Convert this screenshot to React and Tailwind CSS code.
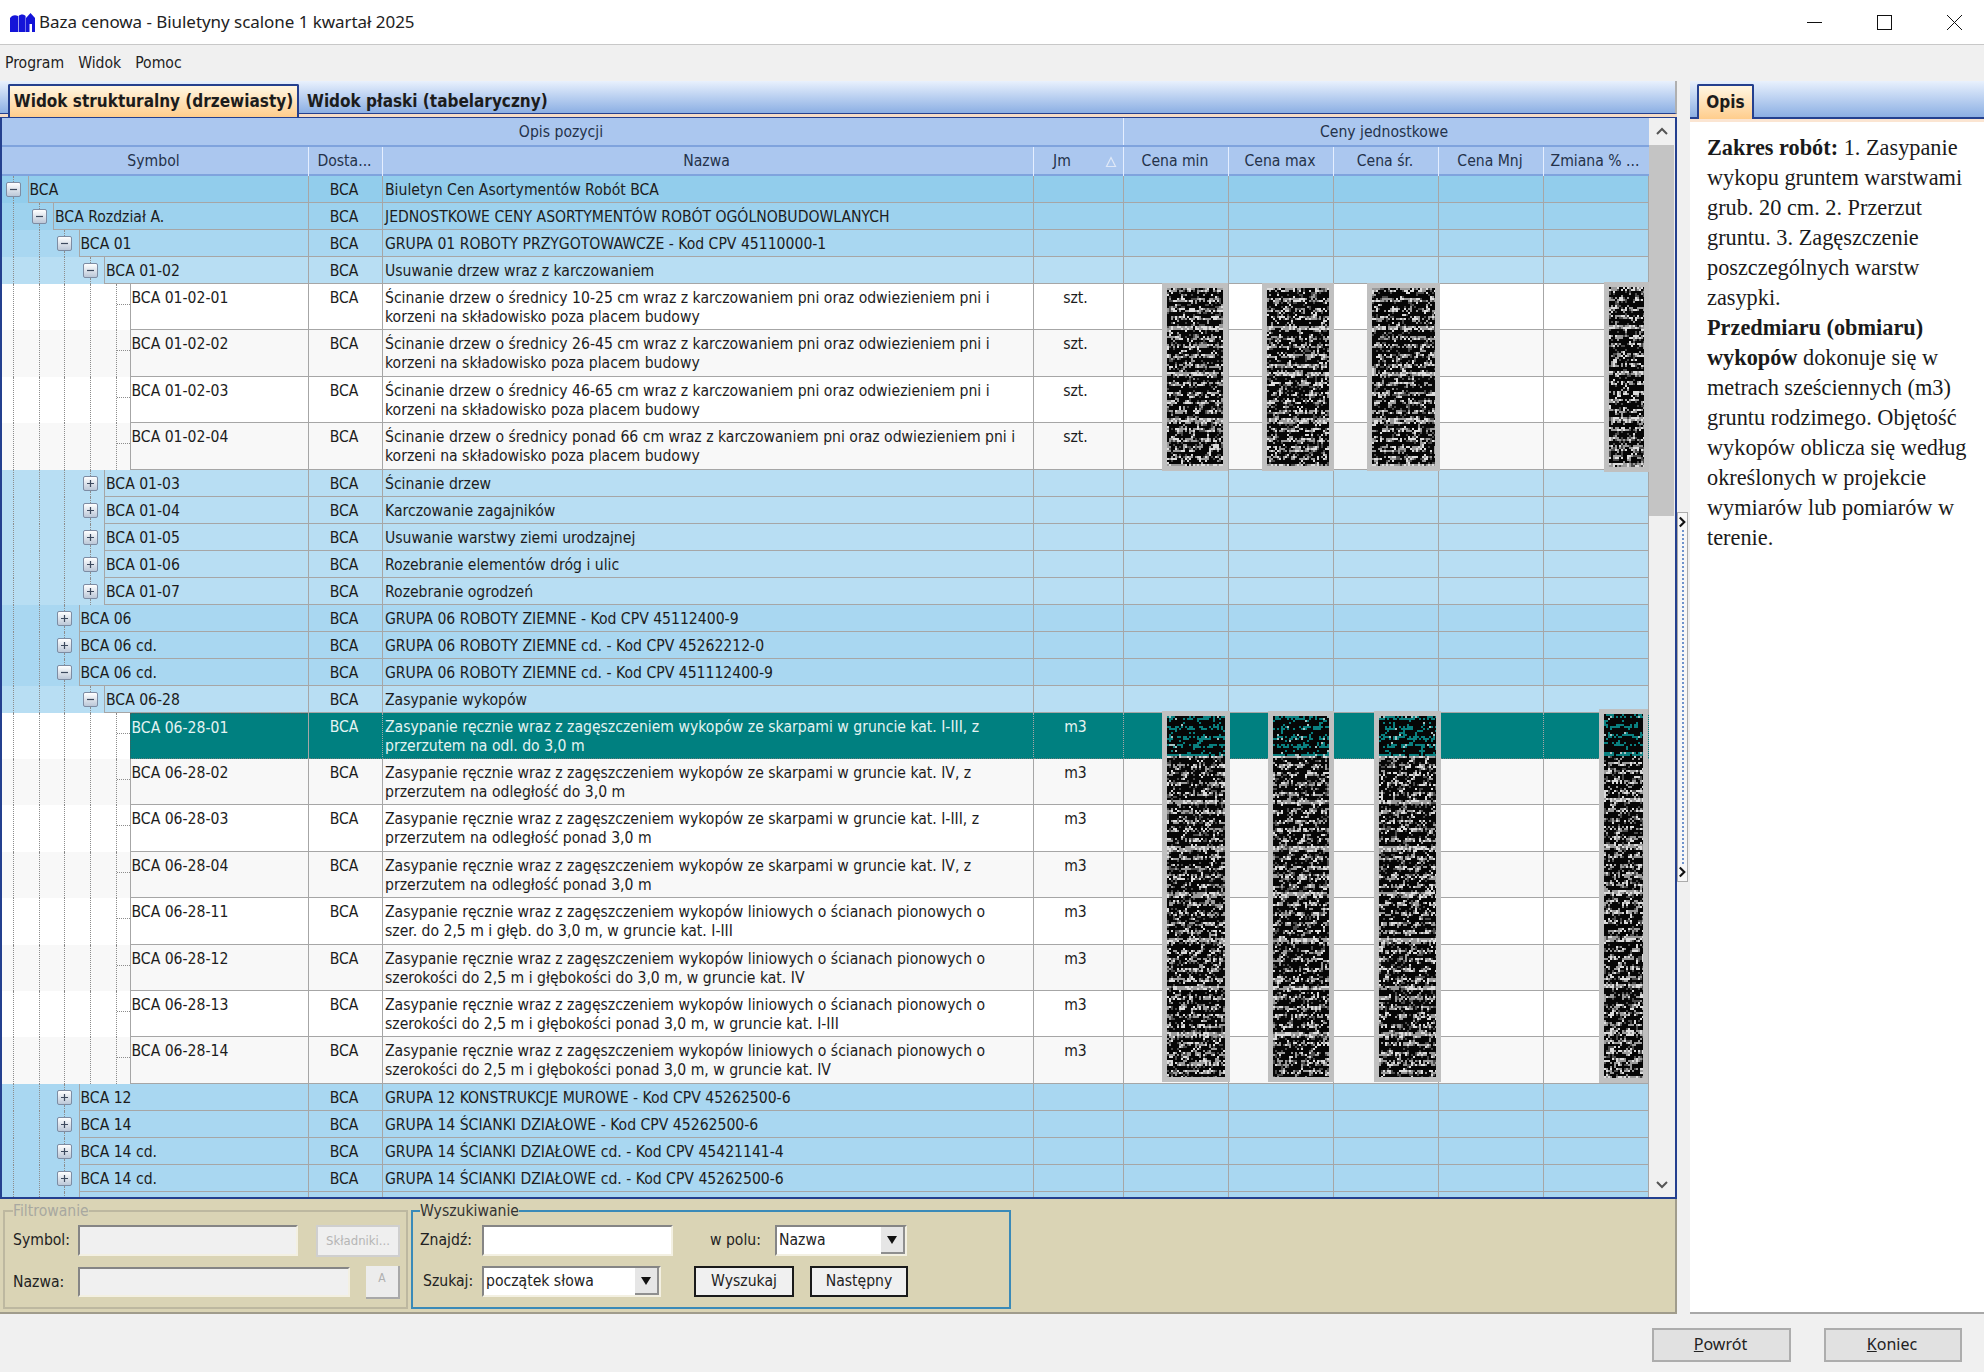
import React, { useMemo } from "react";

const GROUP_BG = ["bg-[#92cdec]", "bg-[#9dd2ee]", "bg-[#a9d7f1]", "bg-[#b8def3]"];

const L = (level, sym, name, open) => ({ level, sym, name, open });
const G = (sym, a, b, unit, sel) => ({ level: 4, sym, name: a + "\n" + b, unit, sel });

const ROWS = [
  L(0, "BCA", "Biuletyn Cen Asortymentów Robót BCA", true),
  L(1, "BCA Rozdział A.", "JEDNOSTKOWE CENY ASORTYMENTÓW ROBÓT OGÓLNOBUDOWLANYCH", true),
  L(2, "BCA 01", "GRUPA 01 ROBOTY PRZYGOTOWAWCZE - Kod CPV 45110000-1", true),
  L(3, "BCA 01-02", "Usuwanie drzew wraz z karczowaniem", true),
  G("BCA 01-02-01", "Ścinanie drzew o średnicy 10-25 cm wraz z karczowaniem pni oraz odwiezieniem pni i", "korzeni na składowisko poza placem budowy", "szt."),
  G("BCA 01-02-02", "Ścinanie drzew o średnicy 26-45 cm wraz z karczowaniem pni oraz odwiezieniem pni i", "korzeni na składowisko poza placem budowy", "szt."),
  G("BCA 01-02-03", "Ścinanie drzew o średnicy 46-65 cm wraz z karczowaniem pni oraz odwiezieniem pni i", "korzeni na składowisko poza placem budowy", "szt."),
  G("BCA 01-02-04", "Ścinanie drzew o średnicy ponad 66 cm wraz z karczowaniem pni oraz odwiezieniem pni i", "korzeni na składowisko poza placem budowy", "szt."),
  L(3, "BCA 01-03", "Ścinanie drzew"),
  L(3, "BCA 01-04", "Karczowanie zagajników"),
  L(3, "BCA 01-05", "Usuwanie warstwy ziemi urodzajnej"),
  L(3, "BCA 01-06", "Rozebranie elementów dróg i ulic"),
  L(3, "BCA 01-07", "Rozebranie ogrodzeń"),
  L(2, "BCA 06", "GRUPA 06 ROBOTY ZIEMNE - Kod CPV 45112400-9"),
  L(2, "BCA 06 cd.", "GRUPA 06 ROBOTY ZIEMNE cd. - Kod CPV 45262212-0"),
  L(2, "BCA 06 cd.", "GRUPA 06 ROBOTY ZIEMNE cd. - Kod CPV 451112400-9", true),
  L(3, "BCA 06-28", "Zasypanie wykopów", true),
  G("BCA 06-28-01", "Zasypanie ręcznie wraz z zagęszczeniem wykopów ze skarpami w gruncie kat. I-III, z", "przerzutem na odl. do 3,0 m", "m3", true),
  G("BCA 06-28-02", "Zasypanie ręcznie wraz z zagęszczeniem wykopów ze skarpami w gruncie kat. IV, z", "przerzutem na odległość do 3,0 m", "m3"),
  G("BCA 06-28-03", "Zasypanie ręcznie wraz z zagęszczeniem wykopów ze skarpami w gruncie kat. I-III, z", "przerzutem na odległość ponad 3,0 m", "m3"),
  G("BCA 06-28-04", "Zasypanie ręcznie wraz z zagęszczeniem wykopów ze skarpami w gruncie kat. IV, z", "przerzutem na odległość ponad 3,0 m", "m3"),
  G("BCA 06-28-11", "Zasypanie ręcznie wraz z zagęszczeniem wykopów liniowych o ścianach pionowych o", "szer. do 2,5 m i głęb. do 3,0 m, w gruncie kat. I-III", "m3"),
  G("BCA 06-28-12", "Zasypanie ręcznie wraz z zagęszczeniem wykopów liniowych o ścianach pionowych o", "szerokości do 2,5 m i głębokości do 3,0 m, w gruncie kat. IV", "m3"),
  G("BCA 06-28-13", "Zasypanie ręcznie wraz z zagęszczeniem wykopów liniowych o ścianach pionowych o", "szerokości do 2,5 m i głębokości ponad 3,0 m, w gruncie kat. I-III", "m3"),
  G("BCA 06-28-14", "Zasypanie ręcznie wraz z zagęszczeniem wykopów liniowych o ścianach pionowych o", "szerokości do 2,5 m i głębokości ponad 3,0 m, w gruncie kat. IV", "m3"),
  L(2, "BCA 12", "GRUPA 12 KONSTRUKCJE MUROWE - Kod CPV 45262500-6"),
  L(2, "BCA 14", "GRUPA 14 ŚCIANKI DZIAŁOWE - Kod CPV 45262500-6"),
  L(2, "BCA 14 cd.", "GRUPA 14 ŚCIANKI DZIAŁOWE cd. - Kod CPV 45421141-4"),
  L(2, "BCA 14 cd.", "GRUPA 14 ŚCIANKI DZIAŁOWE cd. - Kod CPV 45262500-6"),
  L(2, "", ""),
];

const COLS = "grid grid-cols-[307px_74px_651px_90px_105px_105px_105px_105px_105px]";

function Guide() {
  return (
    <div className="w-[25.5px] shrink-0 pr-[2px] flex justify-center">
      <div className="h-full border-l border-dotted border-[#8c8c8c]" />
    </div>
  );
}

function Expander({ open }) {
  return (
    <div className="w-[25.5px] shrink-0 pr-[2px] flex flex-col items-center">
      <div className="h-[6px] border-l border-dotted border-[#8c8c8c]" />
      <div className="w-[15px] h-[15px] shrink-0 rounded-[2px] border border-[#7d8ca3] bg-gradient-to-b from-[#ffffff] to-[#bcc8d8] flex items-center justify-center">
        <svg width="9" height="9" viewBox="0 0 9 9">
          <path d={open ? "M1 4.5h7" : "M1 4.5h7M4.5 1v7"} stroke="#3d4a5e" strokeWidth="1.2" />
        </svg>
      </div>
      <div className="flex-1 border-l border-dotted border-[#8c8c8c]" />
    </div>
  );
}

function Row({ row, leafShade }) {
  const leaf = row.level === 4;
  const bg = leaf ? (leafShade ? "bg-[#f8f8f8]" : "bg-[#ffffff]") : GROUP_BG[row.level];
  const cell = row.sel ? "bg-[#008080] text-[#e4f3f2]" : "text-[#1c1c1c]";
  const h = leaf ? "h-[46.4px]" : "h-[27px]";
  const line = row.sel ? "border-b border-dotted border-b-[#6b7f7f]" : "border-b border-b-[#a6a6a6]";
  const guides = [];
  const count = leaf ? 4 : row.level;
  for (let i = 0; i < count; i++) guides.push(<Guide key={i} />);
  return (
    <div className={`${COLS} ${h} ${bg}`}>
      <div className="flex h-full border-r border-[#a6a6a6]">
        {guides}
        {leaf ? (
          <div className="w-[25.5px] shrink-0 pl-[12px]">
            <div className="h-full border-l border-dotted border-[#8c8c8c] pt-[20px]">
              <div className="border-t border-dotted border-[#8c8c8c]" />
            </div>
          </div>
        ) : (
          <Expander open={row.open} />
        )}
        <div className={`flex-1 min-w-0 pl-[1px] pt-[5px] whitespace-nowrap border-l ${row.sel ? "border-dotted border-t border-[#3f5f5f]" : "border-[#a6a6a6]"} ${line} ${cell}`}>
          {row.sym}
        </div>
      </div>
      <div className={`h-full border-r border-r-[#a6a6a6] ${line} ${cell} pt-[5px] text-center pr-[3px]`}>{row.sym ? "BCA" : ""}</div>
      <div className={`h-full border-r border-r-[#a6a6a6] ${line} ${cell} pt-[5px] pl-[2px] whitespace-pre`}>{row.name}</div>
      <div className={`h-full border-r border-r-[#a6a6a6] ${line} ${cell} pt-[5px] text-center pr-[6px]`}>{row.unit}</div>
      <div className={`h-full border-r border-r-[#a6a6a6] ${line} ${cell}`} />
      <div className={`h-full border-r border-r-[#a6a6a6] ${line} ${cell}`} />
      <div className={`h-full border-r border-r-[#a6a6a6] ${line} ${cell}`} />
      <div className={`h-full border-r border-r-[#a6a6a6] ${line} ${cell}`} />
      <div className={`h-full border-r border-r-[#a6a6a6] ${line} ${cell}`} />
    </div>
  );
}

function noise(w, h, seed, tealH) {
  let s = seed >>> 0;
  const rnd = () => {
    s = (s + 0x6d2b79f5) >>> 0;
    let t = s;
    t = Math.imul(t ^ (t >>> 15), t | 1);
    t ^= t + Math.imul(t ^ (t >>> 7), t | 61);
    return ((t ^ (t >>> 14)) >>> 0) / 4294967296;
  };
  const p = { l: "", m: "", d: "", t: "", q: "" };
  const rect = (k, x, y, ww) => {
    p[k] += `M${x} ${y}h${ww}v2h-${ww}z`;
  };
  for (let y = 0; y < h; y += 2) {
    const ph = ((y + 3) % 9.3) / 9.3;
    const streak = Math.abs(((y + 10) % 46.4) - 2) < 2;
    let base = ph > 0.3 && ph < 0.75 ? 0.52 : 0.1;
    if (streak) base = 0.86;
    const teal = y < tealH;
    for (let x = 0; x < w; x += 2) {
      const wave = Math.sin(x / 2.6 + y / 3) * 0.18;
      const r = rnd();
      if (r < base + wave) {
        const c = rnd();
        if (teal) rect(c < 0.9 ? "t" : "q", x, y, 2);
        else rect(c < 0.42 ? "l" : "m", x, y, 2);
      } else if (r < base + wave + 0.14 && !teal) {
        rect("d", x, y, 2);
      }
    }
  }
  return p;
}

function Noise({ w, h, seed, teal = 0, pos }) {
  const p = useMemo(() => noise(w, h, seed, teal), [w, h, seed, teal]);
  return (
    <div className={`absolute border-[5px] border-[#c0c0c0] overflow-hidden bg-[#060606] ${pos}`}>
      <svg width={w} height={h} viewBox={`0 0 ${w} ${h}`} className="blur-[0.6px] block">
        <path d={p.d} fill="#4c4c4c" />
        <path d={p.m} fill="#9a9a9a" />
        <path d={p.l} fill="#dcdcdc" />
        <path d={p.t} fill="#0a7f7f" />
        <path d={p.q} fill="#a8c4c4" />
      </svg>
    </div>
  );
}

function Chevron({ dir, className }) {
  const d = dir === "up" ? "M1 7l5-5 5 5" : dir === "down" ? "M1 2l5 5 5-5" : "M2 1l5 5-5 5";
  return (
    <svg width="12" height={dir === "right" ? 12 : 9} viewBox={dir === "right" ? "0 0 10 12" : "0 0 12 9"} className={className}>
      <path d={d} fill="none" stroke={dir === "right" ? "#111" : "#555"} strokeWidth={dir === "right" ? 2.4 : 2} />
    </svg>
  );
}

function Arrow() {
  return (
    <div className="w-[24px] h-full bg-[#e6e6e6] border-r-2 border-b-2 border-[#8f8f8f] flex items-center justify-center shrink-0">
      <svg width="10" height="8" viewBox="0 0 10 8"><path d="M0 0h10L5 8z" fill="#111" /></svg>
    </div>
  );
}

const SUNKEN = "border-2 border-t-[#858585] border-l-[#858585] border-r-[#f3f0e2] border-b-[#f3f0e2]";

function GridPanel() {
  let alt = false;
  return (
    <div className="flex border-2 border-t border-[#24408f] h-[1082px] shrink-0">
      <div className="w-[1647px] shrink-0 flex flex-col">
        <div className="h-[29px] flex text-[#24324a] bg-[#abc7ef] border-b-2 border-[#7fa3dd]">
          <div className="w-[1121px] text-center leading-[29px] pr-[3px]">Opis pozycji</div>
          <div className="flex-1 text-center leading-[29px] border-l border-[#e4eeff] pr-[5px]">Ceny jednostkowe</div>
        </div>
        <div className={`${COLS} h-[29px] bg-[#abc7ef] border-b-2 border-[#7fa3dd] text-[#24324a] leading-[29px] text-center whitespace-nowrap`}>
          <div className="border-r border-[#e4eeff] pr-[3px]">Symbol</div>
          <div className="border-r border-[#e4eeff] pr-[2px]">Dosta...</div>
          <div className="border-r border-[#e4eeff] pr-[3px]">Nazwa</div>
          <div className="border-r border-[#e4eeff] flex justify-between items-center pl-[19px] pr-[6px]">
            <span>Jm</span>
            <svg width="12" height="12" viewBox="0 0 12 12"><path d="M6 1.5L10.5 10.5H1.5z" fill="none" stroke="#dfe8f7" strokeWidth="1.2" /></svg>
          </div>
          <div className="border-r border-[#e4eeff] pr-[2px]">Cena min</div>
          <div className="border-r border-[#e4eeff] pr-[2px]">Cena max</div>
          <div className="border-r border-[#e4eeff] pr-[2px]">Cena śr.</div>
          <div className="border-r border-[#e4eeff] pr-[2px]">Cena Mnj</div>
          <div className="pr-[3px]">Zmiana % ...</div>
        </div>
        <div className="relative h-[1021px] overflow-hidden">
          {ROWS.map((r, i) => {
            if (r.level === 4) alt = !alt;
            else alt = false;
            return <Row key={i} row={r} leafShade={!alt} />;
          })}
          <Noise w={56} h={178} seed={11} pos="left-[1160px] top-[107px]" />
          <Noise w={62} h={178} seed={23} pos="left-[1260px] top-[107px]" />
          <Noise w={63} h={178} seed={37} pos="left-[1365px] top-[107px]" />
          <Noise w={35} h={180} seed={41} pos="left-[1602px] top-[106px]" />
          <Noise w={58} h={361} seed={53} teal={40} pos="left-[1160px] top-[535px]" />
          <Noise w={56} h={361} seed={67} teal={40} pos="left-[1266px] top-[535px]" />
          <Noise w={57} h={361} seed={79} teal={40} pos="left-[1372px] top-[535px]" />
          <Noise w={39} h={364} seed={83} teal={42} pos="left-[1597px] top-[533px]" />
        </div>
      </div>
      <div className="flex-1 flex flex-col bg-[#f0f0f0]">
        <div className="h-[27px] shrink-0 flex items-center justify-center"><Chevron dir="up" /></div>
        <div className="h-[371px] shrink-0 mr-[1px] bg-[#c4c4c4]" />
        <div className="flex-1" />
        <div className="h-[24px] shrink-0 flex items-center justify-center mb-[1px]"><Chevron dir="down" /></div>
      </div>
    </div>
  );
}

function FilterPanel() {
  return (
    <div className="flex-1 bg-[#dad4b5] border-r-2 border-b-2 border-[#a09c8c] pl-[3px] pt-[4px] flex gap-[3px] text-[#222]">
      <fieldset className="w-[405px] h-[106px] border-2 border-[#bdb8a0] pl-[8px] pt-[6px]">
        <legend className="ml-[0px] p-0 leading-[16px] text-[#a8a8a0]">Filtrowanie</legend>
        <div className="flex items-center h-[31px]">
          <div className="w-[65px]">Symbol:</div>
          <div className={`w-[220px] h-[31px] bg-[#f0f0f0] ${SUNKEN}`} />
          <div className="w-[84px] h-[32px] ml-[18px] bg-[#efefef] border-2 border-[#cfcfcf] text-center text-[#b5b5b5] text-[13px] leading-[27px]">Składniki...</div>
        </div>
        <div className="flex items-center h-[30px] mt-[11px]">
          <div className="w-[65px]">Nazwa:</div>
          <div className={`w-[272px] h-[30px] bg-[#f0f0f0] ${SUNKEN}`} />
          <div className="w-[34px] h-[33px] ml-[16px] bg-[#ececec] border-r-2 border-b-2 border-[#a8a8a8] text-center text-[#b0b0b0] text-[12px] leading-[24px]">A</div>
        </div>
      </fieldset>
      <fieldset className="w-[600px] h-[106px] border-2 border-[#3a8ab8] pl-[7px] pt-[6px]">
        <legend className="ml-[0px] p-0 leading-[16px] text-[#333]">Wyszukiwanie</legend>
        <div className="flex items-center h-[31px]">
          <div className="w-[62px]">Znajdź:</div>
          <div className={`w-[191px] h-[31px] bg-[#ffffff] ${SUNKEN}`} />
          <div className="w-[65px] ml-[37px]">w polu:</div>
          <div className={`w-[132px] h-[31px] bg-[#ffffff] flex items-center pl-[2px] ${SUNKEN}`}>
            <span className="flex-1">Nazwa</span>
            <Arrow />
          </div>
        </div>
        <div className="flex items-center h-[31px] mt-[10px]">
          <div className="w-[62px] pl-[3px]">Szukaj:</div>
          <div className={`w-[179px] h-[31px] bg-[#ffffff] flex items-center pl-[2px] ${SUNKEN}`}>
            <span className="flex-1 whitespace-nowrap">początek słowa</span>
            <Arrow />
          </div>
          <div className="w-[100px] h-[31px] ml-[33px] bg-[#f0f0f0] border-2 border-[#1a1a1a] text-center leading-[26px]">Wyszukaj</div>
          <div className="w-[98px] h-[31px] ml-[16px] bg-[#f0f0f0] border-2 border-[#1a1a1a] text-center leading-[26px]">Następny</div>
        </div>
      </fieldset>
    </div>
  );
}

export default function App() {
  return (
    <div className="w-[1984px] h-[1372px] flex flex-col bg-[#f0f0f0] overflow-hidden font-['DejaVu_Sans_Condensed','DejaVu_Sans',sans-serif] text-[15.6px] leading-[19px] text-[#1c1c1c]">
      <div className="h-[45px] shrink-0 bg-white border-b border-[#c8c8c8] flex items-center pl-[10px] pr-[22px]">
        <svg width="25" height="19" viewBox="0 0 25 19" className="shrink-0">
          <path d="M0 5l2-2c2-1 4-1 6 0v16H0z" fill="#1414d8" />
          <path d="M8.6 3c2-2 5-2 7 0v16h-7z" fill="#1414d8" />
          <path d="M16 5l4.5-5L25 5v14h-9z" fill="#1414d8" />
          <path d="M19.500 19v-8h2.500v8z" fill="#ffffff" />
        </svg>
        <div className="ml-[4px] -mt-[2px] text-[17px] text-[#222] font-['Noto_Sans',sans-serif] tracking-[-0.05px]">Baza cenowa - Biuletyny scalone 1 kwartał 2025</div>
        <div className="ml-auto flex items-center gap-[55px]">
          <svg width="15" height="15" viewBox="0 0 15 15"><path d="M0 7.5h15" stroke="#111" strokeWidth="1" /></svg>
          <svg width="15" height="15" viewBox="0 0 15 15"><rect x="0.5" y="0.500" width="14" height="14" fill="none" stroke="#111" /></svg>
          <svg width="15" height="15" viewBox="0 0 15 15"><path d="M0 0l15 15M15 0L0 15" stroke="#111" strokeWidth="1" /></svg>
        </div>
      </div>
      <div className="h-[36px] shrink-0 flex items-center pl-[5px] gap-[14px] text-[#222]">
        <span>Program</span>
        <span>Widok</span>
        <span>Pomoc</span>
      </div>
      <div className="flex-1 min-h-0 flex">
        <div className="w-[1677px] shrink-0 flex flex-col">
          <div className="h-[33px] shrink-0 flex pl-[8px] pt-[3px] bg-gradient-to-b from-[#e9f1fd] to-[#8cafe3] border-b border-[#24408f] border-r-2 border-r-[#b0b0b0] font-bold text-[17px]">
            <div className="h-[33px] w-[291px] relative z-10 border-2 border-b-0 border-[#24408f] rounded-t-[2px] bg-gradient-to-b from-[#fff6e2] to-[#ffcd8c] text-center leading-[31px] text-[#1c1c1c] whitespace-nowrap">
              Widok strukturalny (drzewiasty)
            </div>
            <div className="ml-[8px] leading-[34px] text-[#1c1c1c] whitespace-nowrap">Widok płaski (tabelaryczny)</div>
          </div>
          <div className="h-[3px] shrink-0 bg-[#f6dcc6]" />
          <GridPanel />
          <FilterPanel />
        </div>
        <div className="w-[13px] shrink-0 pt-[431px]">
          <div className="w-[11px] h-[370px] border border-[#ababab] bg-[#f7f7f7] flex flex-col items-center py-[3px]">
            <Chevron dir="right" className="shrink-0 w-[9px] h-[12px]" />
            <div className="flex-1 my-[2px] border-l-2 border-dotted border-[#6f93cc]" />
            <Chevron dir="right" className="shrink-0 w-[9px] h-[12px]" />
          </div>
        </div>
        <div className="flex-1 min-w-0 bg-white flex flex-col border-b-2 border-[#a8a8a8]">
          <div className="h-[38px] shrink-0 flex pl-[7px] pt-[3px] bg-gradient-to-b from-[#e9f1fd] to-[#8cafe3] border-b-2 border-[#24408f] font-bold text-[17px]">
            <div className="h-[35px] w-[57px] relative z-10 border-2 border-b-0 border-[#24408f] rounded-t-[2px] bg-gradient-to-b from-[#fff6e2] to-[#ffcd8c] text-center leading-[33px] text-[#1c1c1c]">
              Opis
            </div>
          </div>
          <div className="h-[3px] shrink-0 bg-[#fbe5d2]" />
          <div className="pl-[17px] pt-[11px] font-['Liberation_Serif',serif] text-[22.3px] leading-[30px] text-[#1a1a1a] whitespace-nowrap">
            <b>Zakres robót:</b> 1. Zasypanie<br />
            wykopu gruntem warstwami<br />
            grub. 20 cm. 2. Przerzut<br />
            gruntu. 3. Zagęszczenie<br />
            poszczególnych warstw<br />
            zasypki.<br />
            <b>Przedmiaru (obmiaru)</b><br />
            <b>wykopów</b> dokonuje się w<br />
            metrach sześciennych (m3)<br />
            gruntu rodzimego. Objętość<br />
            wykopów oblicza się według<br />
            określonych w projekcie<br />
            wymiarów lub pomiarów w<br />
            terenie.
          </div>
        </div>
      </div>
      <div className="h-[58px] shrink-0 flex justify-end gap-[33px] pt-[14px] pr-[22px] text-[16px] text-[#222] font-['Noto_Sans',sans-serif]">
        <div className="w-[139px] h-[34px] bg-[#e1e1e1] border-2 border-[#adadad] text-center leading-[29px] pr-[2px]"><u>P</u>owrót</div>
        <div className="w-[138px] h-[34px] bg-[#e1e1e1] border-2 border-[#adadad] text-center leading-[29px] pr-[2px]"><u>K</u>oniec</div>
      </div>
    </div>
  );
}
